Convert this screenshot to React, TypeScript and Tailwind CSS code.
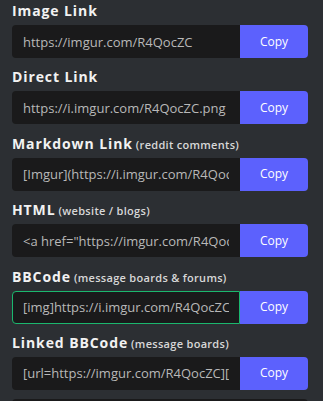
const links = [
  { title: 'Image Link', value: 'https://imgur.com/R4QocZC' },
  { title: 'Direct Link', value: 'https://i.imgur.com/R4QocZC.png' },
  {
    title: 'Markdown Link',
    note: '(reddit comments)',
    value: '[Imgur](https://i.imgur.com/R4QocZC.png)',
  },
  {
    title: 'HTML',
    note: '(website / blogs)',
    value: '<a href="https://imgur.com/R4QocZC"><img src="https://i.imgur.com/R4QocZC.png" title="source: imgur.com" /></a>',
  },
  {
    title: 'BBCode',
    note: '(message boards & forums)',
    value: '[img]https://i.imgur.com/R4QocZC.png[/img]',
    focused: true,
  },
  {
    title: 'Linked BBCode',
    note: '(message boards)',
    value: '[url=https://imgur.com/R4QocZC][img]https://i.imgur.com/R4QocZC.png[/img][/url]',
  },
];

function LinkRow({
  title,
  note,
  value,
  focused,
}: {
  title: string;
  note?: string;
  value: string;
  focused?: boolean;
}) {
  return (
    <div className="flex flex-col">
      <div className="h-[20px] flex items-baseline gap-[3px] whitespace-nowrap">
        <span className="text-[14px] leading-[20px] font-bold tracking-[0.9px] text-[#f2f2f2]">
          {title}
        </span>
        {note && (
          <span className="text-[11px] font-semibold tracking-[0.3px] text-[#d8d8d8]">
            {note}
          </span>
        )}
      </div>
      <div className="mt-[4px] flex h-[33px]">
        <input
          readOnly
          value={value}
          className={
            'flex-1 min-w-0 h-full bg-[#1a1a1b] rounded-l-[4px] text-[13px] text-[#b8b8b8] outline-none ' +
            (focused ? 'border border-[#1bb76e] px-[10px]' : 'px-[11px]')
          }
        />
        <button
          type="button"
          className="w-[68px] h-full bg-[#5c61fd] rounded-r-[4px] text-[12px] text-white"
        >
          Copy
        </button>
      </div>
    </div>
  );
}

export default function App() {
  return (
    <div className="w-[323px] h-[401px] overflow-hidden bg-[#2c2f33] pl-[12px] pr-[15px] pt-[1px] font-['Open_Sans',sans-serif]">
      <div className="flex flex-col gap-[9.4px]">
        {links.map((l) => (
          <LinkRow key={l.title} {...l} />
        ))}
        <div className="h-[33px] bg-[#1a1a1b] rounded-[4px]" />
      </div>
    </div>
  );
}
